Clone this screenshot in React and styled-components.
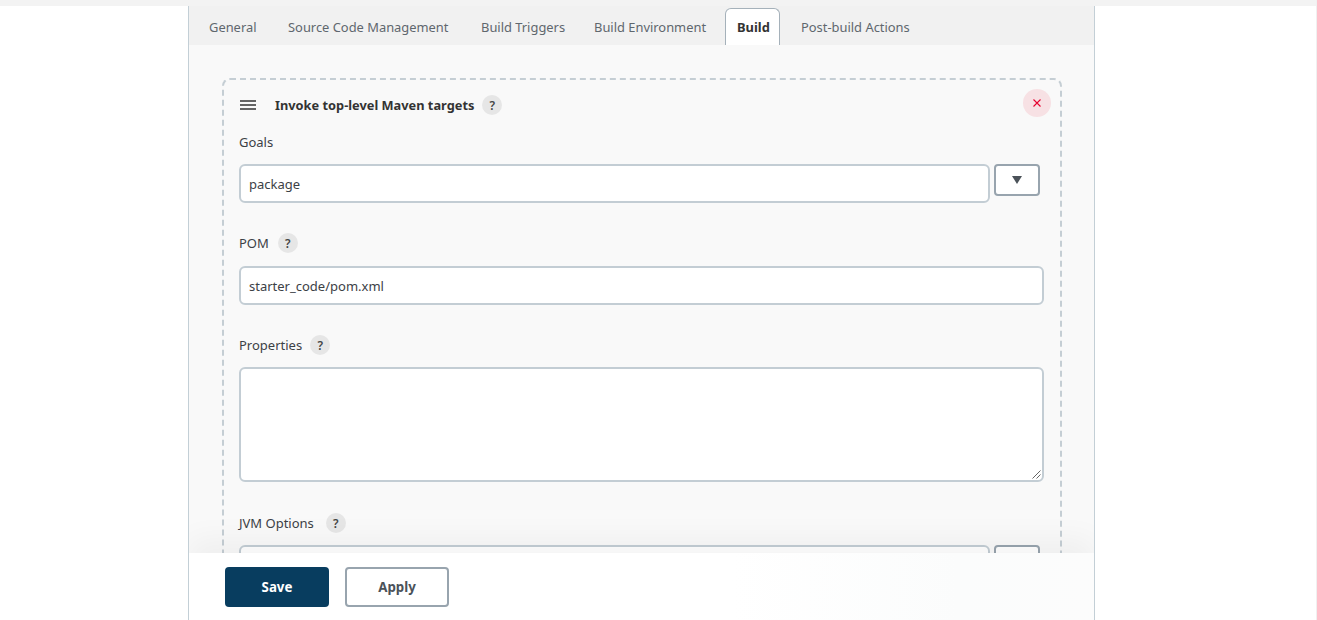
import React from 'react';
import styled, { createGlobalStyle } from 'styled-components';

const GlobalStyle = createGlobalStyle`
  html, body {
    margin: 0;
    height: 620px;
    overflow: hidden;
    background: #fff;
    font-family: "Noto Sans", "Open Sans", sans-serif;
    color: #333;
  }
  * { box-sizing: border-box; }
`;

const Page = styled.div`
  position: relative;
  height: 620px;
  padding-top: 6px;
  overflow: hidden;
  border-right: 1px solid #f0f0f0;
`;
const TopStrip = styled.div`
  position: absolute;
  top: 0;
  left: 0;
  right: 0;
  height: 6px;
  background: #f3f3f3;
`;
const Panel = styled.main`
  position: relative;
  width: 907px;
  height: 614px;
  margin-left: 188px;
  border-left: 1px solid #c3cfd6;
  border-right: 1px solid #c3cfd6;
  background: #f9f9f9;
  overflow: hidden;
`;
const TabBar = styled.nav`
  display: flex;
  align-items: flex-end;
  height: 39px;
  padding-left: 9px;
  background: #f1f1f1;
`;
const Tab = styled.a`
  display: flex;
  flex: none;
  align-items: center;
  width: ${p => p.$width}px;
  height: 37px;
  padding: 0 0 0 ${p => (p.$active ? '11px' : '10px')};
  margin-right: ${p => (p.$active ? '10px' : '0')};
  font-size: 12.9px;
  white-space: nowrap;
  font-weight: ${p => (p.$active ? 700 : 400)};
  color: ${p => (p.$active ? '#333' : '#5f676e')};
  background: ${p => (p.$active ? '#fff' : 'transparent')};
  border: ${p => (p.$active ? '1px solid #a5b1ba' : '1px solid transparent')};
  border-bottom: none;
  border-radius: 6px 6px 0 0;
`;
const Content = styled.section`
  padding: 33px 32px 0 33px;
`;
const Card = styled.div`
  position: relative;
  height: 600px;
  padding: 15px 16px 0 15px;
  border: 2px dashed #c5ced4;
  border-radius: 8px;
`;
const CardHeader = styled.header`
  display: flex;
  align-items: center;
  height: 20px;
`;
const Handle = styled.svg`
  width: 16px;
  height: 10px;
  margin: 0 19px 0 1px;
  flex: none;
`;
const CardTitle = styled.h3`
  margin: 0 8px 0 0;
  font-size: 12.8px;
  font-weight: 700;
  color: #333;
`;
const HelpBadge = styled.span`
  display: flex;
  align-items: center;
  justify-content: center;
  width: 20px;
  height: 20px;
  border-radius: 50%;
  background: #e6e6e6;
  font-size: 12px;
  font-weight: 600;
  color: #444;
`;
const DeleteButton = styled.button`
  position: absolute;
  top: 9px;
  right: 9px;
  display: flex;
  align-items: center;
  justify-content: center;
  width: 28px;
  height: 28px;
  padding: 0;
  border: none;
  border-radius: 50%;
  background: #f7e1e4;
`;
const Field = styled.div`
  margin-top: ${p => p.$top}px;
`;
const Label = styled.label`
  display: flex;
  align-items: center;
  gap: ${p => p.$gap || 8}px;
  height: 20px;
  font-size: 13px;
  color: #3c4146;
`;
const InputRow = styled.div`
  display: flex;
  align-items: flex-start;
  gap: 4px;
  margin-top: ${p => p.$top || 12}px;
`;
const TextInput = styled.div`
  flex: 1;
  display: flex;
  align-items: center;
  height: 39px;
  padding: 0 8px;
  background: #fff;
  border: 2px solid #c3cdd4;
  border-radius: 6px;
  font-size: 13px;
  color: #3c4146;
`;
const TextArea = styled.div`
  position: relative;
  flex: 1;
  height: 115px;
  background: #fff;
  border: 2px solid #c3cdd4;
  border-radius: 6px;
`;
const Grip = styled.svg`
  position: absolute;
  right: 1px;
  bottom: 1px;
  width: 9px;
  height: 9px;
`;
const DropButton = styled.button`
  display: flex;
  align-items: center;
  justify-content: center;
  flex: none;
  width: 46px;
  height: 32px;
  margin-right: 4px;
  padding: 0;
  background: #fff;
  border: 2px solid #98a4ae;
  border-radius: 4px;
`;
const Arrow = styled.span`
  width: 0;
  height: 0;
  border-left: 5px solid transparent;
  border-right: 5px solid transparent;
  border-top: 8px solid #4b5259;
`;
const Footer = styled.footer`
  position: absolute;
  left: 0;
  right: 0;
  bottom: 0;
  display: flex;
  align-items: flex-start;
  gap: 16px;
  height: 67px;
  padding: 14px 0 0 36px;
  background: linear-gradient(90deg, #fff 0%, #fff 60%, #fbfcfc 85%, #fcfcfc 100%);
  box-shadow: 0 -14px 30px rgba(0, 0, 0, 0.045);
`;
const Button = styled.button`
  width: 104px;
  height: 40px;
  padding: 0;
  border-radius: 4px;
  font-family: inherit;
  font-size: 13.3px;
  font-weight: 700;
  color: ${p => (p.$primary ? '#fff' : '#4b5259')};
  background: ${p => (p.$primary ? '#083d5f' : '#fff')};
  border: ${p => (p.$primary ? 'none' : '2px solid #98a4ae')};
`;

const tabs = [
  { label: 'General', width: 79 },
  { label: 'Source Code Management', width: 193 },
  { label: 'Build Triggers', width: 113 },
  { label: 'Build Environment', width: 142 },
  { label: 'Build', width: 55, active: true },
  { label: 'Post-build Actions', width: 130 },
];

export default function App() {
  return (
    <Page>
      <GlobalStyle />
      <TopStrip />
      <Panel>
        <TabBar>
          {tabs.map(t => <Tab key={t.label} $width={t.width} $active={t.active}>{t.label}</Tab>)}
        </TabBar>
        <Content>
          <Card>
            <CardHeader>
              <Handle viewBox="0 0 16 10">
                <path d="M0 1h16M0 5h16M0 9h16" stroke="#333" strokeWidth="1.3" />
              </Handle>
              <CardTitle>Invoke top-level Maven targets</CardTitle>
              <HelpBadge>?</HelpBadge>
            </CardHeader>
            <DeleteButton>
              <svg width="10" height="10" viewBox="0 0 10 10">
                <path d="M1.5 1.5l7 7M8.5 1.5l-7 7" stroke="#e6002e" strokeWidth="1.1" />
              </svg>
            </DeleteButton>
            <Field $top={17}>
              <Label>Goals</Label>
              <InputRow>
                <TextInput>package</TextInput>
                <DropButton><Arrow /></DropButton>
              </InputRow>
            </Field>
            <Field $top={30}>
              <Label $gap={9}>POM <HelpBadge>?</HelpBadge></Label>
              <InputRow $top={13}><TextInput>starter_code/pom.xml</TextInput></InputRow>
            </Field>
            <Field $top={30}>
              <Label>Properties <HelpBadge>?</HelpBadge></Label>
              <InputRow>
                <TextArea>
                  <Grip viewBox="0 0 9 9">
                    <path d="M8.5 0.5L0.5 8.5M8.5 4.5L4.5 8.5" stroke="#666" strokeWidth="1" />
                  </Grip>
                </TextArea>
              </InputRow>
            </Field>
            <Field $top={31}>
              <Label $gap={12}>JVM Options <HelpBadge>?</HelpBadge></Label>
              <InputRow>
                <TextInput />
                <DropButton><Arrow /></DropButton>
              </InputRow>
            </Field>
          </Card>
        </Content>
        <Footer>
          <Button $primary>Save</Button>
          <Button>Apply</Button>
        </Footer>
      </Panel>
    </Page>
  );
}
